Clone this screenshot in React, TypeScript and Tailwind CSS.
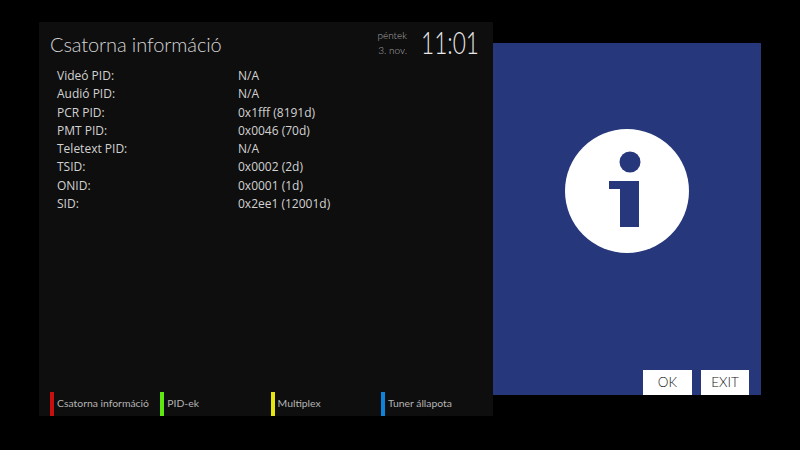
const rows = [
  ["Videó PID:", "N/A"],
  ["Audió PID:", "N/A"],
  ["PCR PID:", "0x1fff (8191d)"],
  ["PMT PID:", "0x0046 (70d)"],
  ["Teletext PID:", "N/A"],
  ["TSID:", "0x0002 (2d)"],
  ["ONID:", "0x0001 (1d)"],
  ["SID:", "0x2ee1 (12001d)"],
];

const tabs = [
  { label: "Csatorna információ", color: "bg-[#c80f0f]" },
  { label: "PID-ek", color: "bg-[#5fe80f]" },
  { label: "Multiplex", color: "bg-[#e6e60f]" },
  { label: "Tuner állapota", color: "bg-[#0f82dc]" },
];

export default function App() {
  return (
    <div className="h-[450px] w-[800px] overflow-hidden bg-black font-['Open_Sans',sans-serif]">
      <div className="flex items-start pl-[39px] pt-[22px]">
        {/* Left panel */}
        <div className="flex h-[394px] w-[454px] flex-col bg-[#0e0e0e]">
          <div className="flex h-[45px] items-start justify-between pl-[11px] pr-[16px]">
            <h1 className="pt-[9px] font-['Lato',sans-serif] text-[20px] leading-[27px] font-light tracking-[-0.1px] text-[#d4d4d4]">
              Csatorna információ
            </h1>
            <div className="flex items-start gap-[14px]">
              <div className="pt-[6px] text-right font-['Lato',sans-serif] text-[10px] leading-[14.5px] font-light text-[#aaaaaa]">
                <div>péntek</div>
                <div>3. nov.</div>
              </div>
              <div className="w-[56px] pt-[1px]">
                <div className="origin-left scale-x-[0.73] whitespace-nowrap font-['Lato',sans-serif] text-[31px] leading-[38px] font-light text-[#e8e8e8]">
                  11:01
                </div>
              </div>
            </div>
          </div>

          <div className="flex-1 pl-[18px]">
            {rows.map(([name, value]) => (
              <div key={name} className="flex h-[18.25px] items-center text-[12px] text-[#d2d2d2]">
                <span className="w-[181px]">{name}</span>
                <span>{value}</span>
              </div>
            ))}
          </div>

          <div className="flex h-[24px] pl-[11px]">
            {tabs.map((tab) => (
              <div key={tab.label} className="flex w-[110.3px] items-center gap-[3px]">
                <div className={`h-[24px] w-[4px] ${tab.color}`} />
                <span className="whitespace-nowrap font-['Lato',sans-serif] text-[10.4px] text-[#b4b4b4]">{tab.label}</span>
              </div>
            ))}
          </div>
        </div>

        {/* Right panel */}
        <div className="mt-[21px] flex h-[352px] w-[268px] flex-col bg-[#27377b]">
          <div className="flex flex-1 justify-center pt-[86px]">
            <svg width="124" height="124" viewBox="0 0 124 124">
              <circle cx="62" cy="62" r="62" fill="#ffffff" />
              <circle cx="65" cy="33" r="10.5" fill="#27377b" />
              <path d="M44 52H74V98H55V60H44Z" fill="#27377b" />
            </svg>
          </div>
          <div className="flex justify-end gap-[9px] pr-[12px]">
            <div className="flex h-[25px] w-[49px] items-center justify-center bg-white font-['Lato',sans-serif] text-[13.5px] font-light text-[#111111]">
              OK
            </div>
            <div className="flex h-[25px] w-[48px] items-center justify-center bg-white font-['Lato',sans-serif] text-[13.5px] font-light text-[#111111]">
              EXIT
            </div>
          </div>
        </div>
      </div>
    </div>
  );
}
